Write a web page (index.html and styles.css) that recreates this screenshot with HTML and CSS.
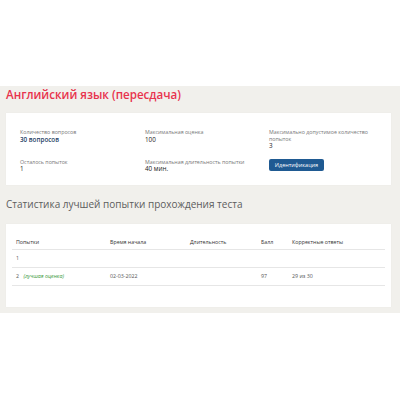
FILE: index.html
```html
<!DOCTYPE html>
<html lang="ru">
<head>
<meta charset="utf-8">
<link rel="stylesheet" href="styles.css">
</head>
<body>
<div class="top"></div>
<main class="main">
  <h1 class="title">Английский язык (пересдача)</h1>
  <section class="card info">
    <div class="field">
      <div class="label">Количество вопросов</div>
      <div class="value accent">30 вопросов</div>
    </div>
    <div class="field">
      <div class="label">Максимальная оценка</div>
      <div class="value">100</div>
    </div>
    <div class="field">
      <div class="label">Максимально допустимое количество попыток</div>
      <div class="value">3</div>
    </div>
    <div class="field">
      <div class="label">Осталось попыток</div>
      <div class="value">1</div>
    </div>
    <div class="field">
      <div class="label">Максимальная длительность попытки</div>
      <div class="value">40 мин.</div>
    </div>
    <div class="field">
      <button class="btn">Идентификация</button>
    </div>
  </section>
  <h2 class="subtitle">Статистика лучшей попытки прохождения теста</h2>
  <section class="card stats">
    <table class="table">
      <colgroup>
        <col class="c1"><col class="c2"><col class="c3"><col class="c4"><col>
      </colgroup>
      <thead>
        <tr><th>Попытки</th><th>Время начала</th><th>Длительность</th><th>Балл</th><th>Корректные ответы</th></tr>
      </thead>
      <tbody>
        <tr><td>1</td><td></td><td></td><td></td><td></td></tr>
        <tr><td>2 <span class="best">(лучшая оценка)</span></td><td>02-03-2022</td><td></td><td>97</td><td>29 из 30</td></tr>
      </tbody>
    </table>
  </section>
</main>
</body>
</html>
```
FILE: styles.css
```css
html, body {
  margin: 0;
  padding: 0;
  background: #fff;
  font-family: "Open Sans", "Noto Sans", sans-serif;
}
.top {
  height: 86px;
  background: #fff;
}
.main {
  background: #f1f0ec;
  padding: 0 9px 6px 6px;
}
.title {
  margin: 0;
  padding-top: 1px;
  height: 26px;
  font-size: 11.6px;
  line-height: 16px;
  font-weight: 600;
  color: #e8334d;
}
.card {
  background: #fff;
  box-shadow: 0 0 1px rgba(0,0,0,0.06);
}
.info {
  display: grid;
  grid-template-columns: 125px 124px 102px;
  row-gap: 9px;
  align-items: start;
  padding: 16px 14px 12px;
}
.label {
  font-size: 5.3px;
  line-height: 6.5px;
  color: #777;
}
.value {
  font-size: 6.3px;
  line-height: 7.5px;
  font-weight: 400;
  color: #222;
}
.value.accent {
  color: #1f3f66;
  font-weight: 600;
}
.btn {
  display: block;
  width: 55px;
  height: 12px;
  padding: 0;
  border: 0;
  border-radius: 2px;
  background: #1f5a92;
  color: #fff;
  font-family: inherit;
  font-size: 5.5px;
  font-weight: 400;
}
.subtitle {
  margin: 0;
  padding: 13px 0 0;
  height: 26px;
  font-size: 10px;
  line-height: 13px;
  font-weight: 400;
  color: #5c5c5c;
}
.stats {
  padding: 15px 6px 21px;
}
.table {
  width: 100%;
  border-collapse: collapse;
  table-layout: fixed;
  font-size: 5.3px;
  line-height: 7px;
  color: #555;
}
.c1 { width: 94px; }
.c2 { width: 80px; }
.c3 { width: 71px; }
.c4 { width: 31px; }
.table th {
  text-align: left;
  font-weight: 400;
  color: #333;
  padding: 0.5px 4px 2.5px;
  border-bottom: 1px solid #e6e6e6;
}
.table td {
  padding: 5px 4px;
  border-bottom: 1px solid #e6e6e6;
  height: 7px;
}
.best {
  margin-left: 3px;
  font-style: italic;
  color: #3a9a3a;
}
```
